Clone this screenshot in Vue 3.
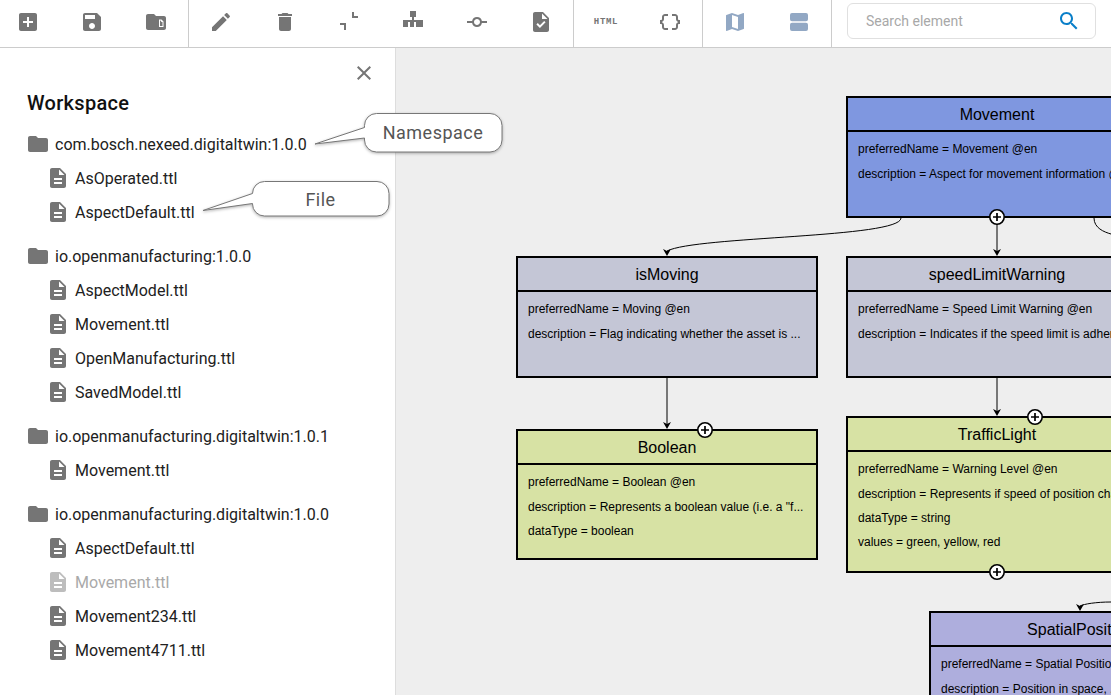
<script setup>
const tools = [
  [
    { name: 'add', paths: ['M19 3H5c-1.11 0-2 .9-2 2v14c0 1.1.89 2 2 2h14c1.1 0 2-.9 2-2V5c0-1.1-.9-2-2-2zm-2 10h-4v4h-2v-4H7v-2h4V7h2v4h4v2z'] },
    { name: 'save', paths: ['M17 3H5c-1.11 0-2 .9-2 2v14c0 1.1.89 2 2 2h14c1.1 0 2-.9 2-2V7l-4-4zm-5 16c-1.66 0-3-1.34-3-3s1.34-3 3-3 3 1.34 3 3-1.34 3-3 3zm3-10H5V5h10v4z'] },
    { name: 'folder', paths: ['M10 4H4c-1.1 0-2 .9-2 2v12c0 1.1.9 2 2 2h16c1.1 0 2-.9 2-2V8c0-1.1-.9-2-2-2h-8l-2-2zM15 9.500h2.500l2 2V17H15V9.500zM16 10.500V16h2.500v-4h-1l-1-1.500H16z'] }
  ],
  [
    { name: 'edit', paths: ['M3 17.25V21h3.75L17.81 9.94l-3.75-3.75L3 17.25zM20.71 7.04c.39-.39.39-1.02 0-1.41l-2.34-2.34c-.39-.39-1.02-.39-1.41 0l-1.83 1.83 3.75 3.75 1.83-1.83z'] },
    { name: 'delete', paths: ['M6 19c0 1.1.9 2 2 2h8c1.1 0 2-.9 2-2V7H6v12zM19 4h-3.500l-1-1h-5l-1 1H5v2h14V4z'] },
    { name: 'collapse', paths: ['M15 2h2v4h4v2h-6V2zM3 13h6v7H7v-5H3v-2z'] },
    { name: 'tree', paths: ['M9 1h6v6h-2v3h9v7h-7v-5h-2v5H9v-5H7v5H2v-7h9V7H9V1z'] },
    { name: 'commit', paths: ['M16.9 11a5 5 0 0 0-9.8 0H2v2h5.1a5 5 0 0 0 9.8 0H22v-2h-5.1zM12 15c-1.66 0-3-1.34-3-3s1.34-3 3-3 3 1.34 3 3-1.34 3-3 3z'] },
    { name: 'task', paths: ['M14 2H6c-1.1 0-1.99.9-1.99 2L4 20c0 1.1.89 2 1.99 2H18c1.1 0 2-.9 2-2V8l-6-6zm-3.06 16L7.4 14.46l1.41-1.41 2.12 2.12 4.24-4.24 1.41 1.41L10.94 18zM13 9V3.500L18.500 9H13z'] }
  ],
  [
    { name: 'html', label: 'HTML' },
    { name: 'json', paths: ['M4 7v2c0 .55-.45 1-1 1H2v4h1c.55 0 1 .45 1 1v2c0 1.65 1.35 3 3 3h3v-2H7c-.55 0-1-.45-1-1v-2c0-1.3-.84-2.42-2-2.83v-.34C5.16 11.42 6 10.3 6 9V7c0-.55.45-1 1-1h3V4H7C5.35 4 4 5.35 4 7zM21 10c-.55 0-1-.45-1-1V7c0-1.65-1.35-3-3-3h-3v2h3c.55 0 1 .45 1 1v2c0 1.3.84 2.42 2 2.83v.34c-1.16.41-2 1.52-2 2.83v2c0 .55-.45 1-1 1h-3v2h3c1.65 0 3-1.35 3-3v-2c0-.55.45-1 1-1h1v-4h-1z'] }
  ],
  [
    { name: 'map', accent: true, paths: ['M20.5 3l-.16.03L15 5.1 9 3 3.36 4.9c-.21.07-.36.25-.36.48V20.5c0 .28.22.5.5.5l.16-.03L9 18.9l6 2.1 5.64-1.9c.21-.07.36-.25.36-.48V3.500c0-.28-.22-.5-.5-.5zM15 19l-6-2.11V5l6 2.11V19z'] },
    { name: 'agenda', accent: true, paths: ['M5 3h14a2 2 0 0 1 2 2v4.300a2 2 0 0 1-2 2H5a2 2 0 0 1-2-2V5a2 2 0 0 1 2-2zM5 12.700h14a2 2 0 0 1 2 2V19a2 2 0 0 1-2 2H5a2 2 0 0 1-2-2v-4.300a2 2 0 0 1 2-2z'] }
  ]
]

const folderIcon = 'M10 4H4c-1.1 0-1.99.9-1.99 2L2 18c0 1.1.9 2 2 2h16c1.1 0 2-.9 2-2V8c0-1.1-.9-2-2-2h-8l-2-2z'
const fileIcon = 'M14 2H6c-1.1 0-1.99.9-1.99 2L4 20c0 1.1.89 2 1.99 2H18c1.1 0 2-.9 2-2V8l-6-6zm2 16H8v-2h8v2zm0-4H8v-2h8v2zm-3-5V3.500L18.500 9H13z'

const workspace = [
  { ns: 'com.bosch.nexeed.digitaltwin:1.0.0', files: [{ n: 'AsOperated.ttl' }, { n: 'AspectDefault.ttl' }] },
  { ns: 'io.openmanufacturing:1.0.0', files: [{ n: 'AspectModel.ttl' }, { n: 'Movement.ttl' }, { n: 'OpenManufacturing.ttl' }, { n: 'SavedModel.ttl' }] },
  { ns: 'io.openmanufacturing.digitaltwin:1.0.1', files: [{ n: 'Movement.ttl' }] },
  { ns: 'io.openmanufacturing.digitaltwin:1.0.0', files: [{ n: 'AspectDefault.ttl' }, { n: 'Movement.ttl', off: true }, { n: 'Movement234.ttl' }, { n: 'Movement4711.ttl' }] }
]

// canvas origin is (396, 48) in the page
const nodes = [
  { title: 'Movement', x: 450, y: 48, h: 122, color: '#7f97e0', lines: ['preferredName = Movement @en', 'description = Aspect for movement information @en'] },
  { title: 'isMoving', x: 120, y: 208, h: 122, color: '#c4c6d6', lines: ['preferredName = Moving @en', 'description = Flag indicating whether the asset is ...'] },
  { title: 'speedLimitWarning', x: 450, y: 208, h: 122, color: '#c4c6d6', lines: ['preferredName = Speed Limit Warning @en', 'description = Indicates if the speed limit is adhered to.'] },
  { title: 'Boolean', x: 120, y: 381, h: 131, color: '#d7e2a4', lines: ['preferredName = Boolean @en', 'description = Represents a boolean value (i.e. a "f...', 'dataType = boolean'] },
  { title: 'TrafficLight', x: 450, y: 368, h: 157, color: '#d7e2a4', lines: ['preferredName = Warning Level @en', 'description = Represents if speed of position change is...', 'dataType = string', 'values = green, yellow, red'] },
  { title: 'SpatialPosition', x: 533, y: 563, h: 150, color: '#aeaedd', lines: ['preferredName = Spatial Position @en', 'description = Position in space, ...'] }
]

const plusButtons = [[601, 169], [309, 382], [639, 369], [601, 524]]
const arrows = [[271, 208], [601, 208], [271, 381], [601, 368], [684, 563]]
</script>

<template>
  <div class="page">
    <header class="toolbar">
      <div v-for="(group, i) in tools" :key="i" class="tool-group" :class="{ first: i === 0 }">
        <button v-for="tool in group" :key="tool.name" class="tool" :class="{ accent: tool.accent }" type="button">
          <span v-if="tool.label" class="html-label">{{ tool.label }}</span>
          <svg v-else width="24" height="24" viewBox="0 0 24 24">
            <path v-for="d in tool.paths" :key="d" :d="d" fill-rule="evenodd" />
          </svg>
        </button>
      </div>
      <label class="search">
        <span class="search-text">Search element</span>
        <svg width="24" height="24" viewBox="0 0 24 24">
          <path d="M15.5 14h-.79l-.28-.27C15.41 12.59 16 11.11 16 9.5 16 5.91 13.09 3 9.5 3S3 5.91 3 9.5 5.91 16 9.5 16c1.61 0 3.09-.59 4.23-1.57l.27.28v.79l5 4.99L20.49 19l-4.99-5zm-6 0C7.01 14 5 11.99 5 9.5S7.01 5 9.5 5 14 7.01 14 9.5 11.99 14 9.5 14z" />
        </svg>
      </label>
    </header>

    <main class="content">
      <aside class="sidebar">
        <div class="close-row">
          <svg width="24" height="24" viewBox="0 0 24 24">
            <path d="M19 6.41 17.59 5 12 10.59 6.41 5 5 6.41 10.59 12 5 17.59 6.41 19 12 13.41 17.59 19 19 17.59 13.41 12z" />
          </svg>
        </div>
        <h2 class="title">Workspace</h2>
        <section v-for="(group, i) in workspace" :key="i" class="ns-group">
          <div class="row">
            <svg class="ns-icon" width="24" height="24" viewBox="0 0 24 24"><path :d="folderIcon" /></svg>
            <span>{{ group.ns }}</span>
          </div>
          <div v-for="file in group.files" :key="file.n" class="row file" :class="{ off: file.off }">
            <svg width="24" height="24" viewBox="0 0 24 24"><path :d="fileIcon" /></svg>
            <span>{{ file.n }}</span>
          </div>
        </section>
      </aside>

      <div class="canvas">
        <div
          v-for="node in nodes"
          :key="node.title"
          class="node"
          :style="{ left: node.x + 'px', top: node.y + 'px', height: node.h + 'px', background: node.color }"
        >
          <div class="node-title">{{ node.title }}</div>
          <div class="node-body">
            <div v-for="line in node.lines" :key="line" class="node-line">{{ line }}</div>
          </div>
        </div>

        <svg class="edges" width="715" height="647" viewBox="0 0 715 647">
          <g fill="none" stroke="#000" stroke-width="1">
            <path d="M505 170C505 190 300 188 271 203" />
            <path d="M698 170C698 180 708 184 715 186" />
            <path d="M601 176V204" />
            <path d="M271 330V377" />
            <path d="M601 330V364" />
            <path d="M684 558C688 556 700 554 715 554" />
          </g>
          <path v-for="a in arrows" :key="a.join()" :d="`M${a[0] - 4} ${a[1] - 7}L${a[0]} ${a[1] - 5}L${a[0] + 4} ${a[1] - 7}L${a[0]} ${a[1]}Z`" fill="#000" />
          <g v-for="p in plusButtons" :key="p.join()" :transform="`translate(${p[0]} ${p[1]})`">
            <circle r="7.2" fill="#fff" stroke="#000" stroke-width="1.6" />
            <path d="M-4 0H4M0 -4V4" stroke="#000" stroke-width="1.7" />
          </g>
        </svg>
      </div>

      <div class="callout namespace">
        <svg width="190" height="41" viewBox="0 0 190 41">
          <path d="M62.500 .5H176a12 12 0 0 1 12 12V27a12 12 0 0 1-12 12H62.500a12 12 0 0 1-12-12V25L1 31L50.500 14.500V12.500a12 12 0 0 1 12-12Z" />
        </svg>
        <span>Namespace</span>
      </div>
      <div class="callout file-note">
        <svg width="190" height="39" viewBox="0 0 190 39">
          <path d="M62.500 .5H175a12 12 0 0 1 12 12V23a12 12 0 0 1-12 12H62.500a12 12 0 0 1-12-12V22.500L1 29.500L50.500 12.500a12 12 0 0 1 12-12Z" />
        </svg>
        <span>File</span>
      </div>
    </main>
  </div>
</template>

<style>
html, body { margin: 0; overflow: hidden; }
</style>

<style scoped>
.page {
  position: relative;
  width: 1111px;
  height: 695px;
  display: flex;
  flex-direction: column;
  overflow: hidden;
  background: #fff;
  font-family: Roboto, "Liberation Sans", sans-serif;
  color: #212121;
}
.toolbar {
  flex: none;
  height: 47px;
  display: flex;
  border-bottom: 1px solid #ccc;
  overflow: hidden;
}
.tool-group {
  display: flex;
  border-right: 1px solid #ccc;
}
.tool-group.first { margin-left: -4px; }
.tool {
  width: 64px;
  height: 44px;
  padding: 0;
  border: 0;
  background: none;
  display: flex;
  align-items: center;
  justify-content: center;
}
.tool svg { fill: #757575; display: block; }
.tool.accent svg { fill: #92a8c4; }
.html-label {
  font: 700 9px "Liberation Mono", monospace;
  letter-spacing: .7px;
  color: #757575;
}
.search {
  box-sizing: border-box;
  width: 249px;
  height: 36px;
  margin: 3px 0 0 15px;
  padding: 0 14px 0 18px;
  display: flex;
  align-items: center;
  justify-content: space-between;
  border: 1px solid #e0e0e0;
  border-radius: 6px;
}
.search-text { font-size: 14px; color: #a8a8a8; }
.search svg { fill: #0a7fc9; display: block; }
.content {
  flex: 1;
  min-height: 0;
  display: flex;
}
.sidebar {
  box-sizing: border-box;
  flex: none;
  width: 396px;
  padding: 13px 0 0 26px;
  border-right: 1px solid #ddd;
  background: #fff;
}
.close-row {
  display: flex;
  justify-content: flex-end;
  padding-right: 19px;
  height: 24px;
}
.close-row svg { fill: #757575; display: block; }
.title {
  margin: 6px 0 0 1px;
  height: 24px;
  font-size: 20px;
  line-height: 24px;
  font-weight: 500;
  letter-spacing: .3px;
  color: #111;
}
.ns-group { margin-bottom: 10px; }
.ns-group:first-of-type { margin-top: 12px; }
.row {
  height: 34px;
  display: flex;
  align-items: center;
  font-size: 16px;
}
.row svg { flex: none; fill: #757575; }
.ns-icon { margin-right: 5px; }
.file { padding-left: 20px; }
.file svg { margin-right: 5px; }
.file.off { color: #a9a9a9; }
.file.off svg { fill: #bdbdbd; }
.canvas {
  position: relative;
  flex: 1;
  overflow: hidden;
  background: #eee;
}
.node {
  position: absolute;
  box-sizing: border-box;
  width: 302px;
  border: 2px solid #000;
  color: #000;
  font-family: "Liberation Sans", Arial, sans-serif;
}
.node-title {
  box-sizing: border-box;
  height: 34px;
  border-bottom: 2px solid #000;
  font-size: 16px;
  line-height: 33px;
  text-align: center;
}
.node-body { padding: 5px 0 0 10px; }
.node-line {
  height: 24px;
  font-size: 12px;
  line-height: 24px;
  white-space: nowrap;
}
.node-line:first-child { height: 25px; }
.edges {
  position: absolute;
  left: 0;
  top: 0;
}
.callout {
  position: absolute;
  display: flex;
  align-items: center;
  color: #555;
  font-size: 18px;
  letter-spacing: .5px;
}
.callout svg {
  position: absolute;
  left: 0;
  top: 0;
  overflow: visible;
  filter: drop-shadow(0 1px 1.5px rgba(0, 0, 0, .3));
}
.callout path { fill: #fff; stroke: #777; stroke-width: 1; }
.callout span { position: relative; text-align: center; }
.namespace { left: 314px; top: 113px; width: 190px; height: 39px; }
.namespace span { margin-left: 50px; width: 138px; }
.file-note { left: 202px; top: 181px; width: 190px; height: 36px; }
.file-note span { margin-left: 50px; width: 137px; }
</style>
